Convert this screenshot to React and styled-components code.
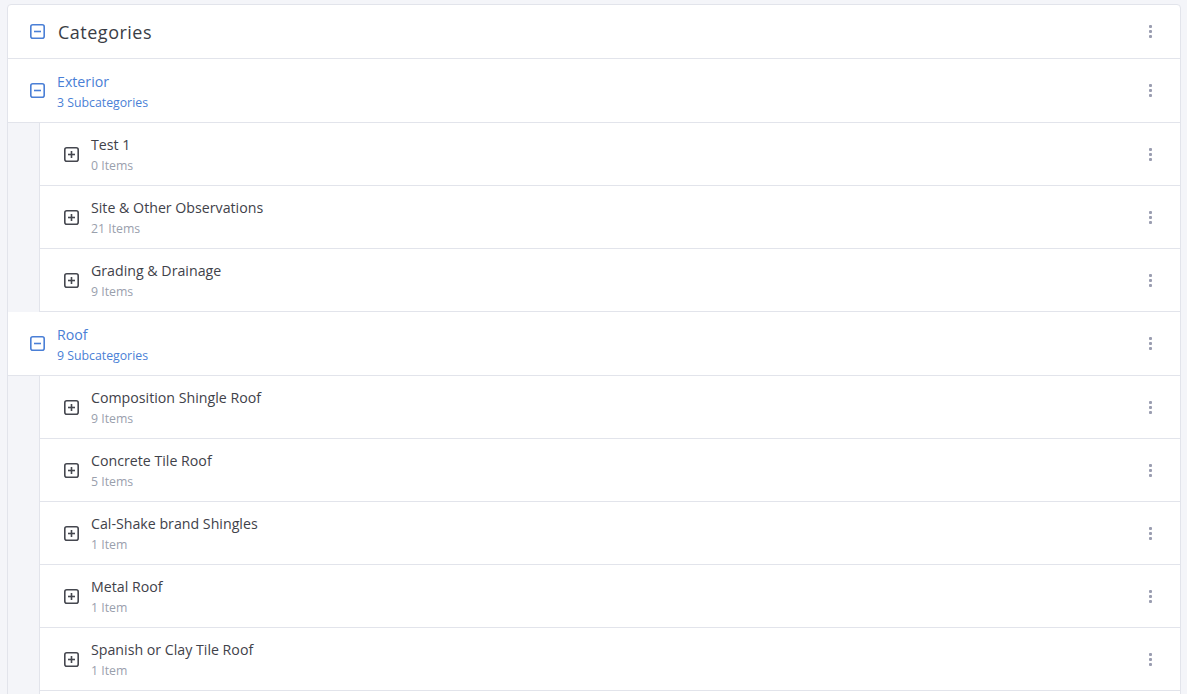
import React from "react";
import styled, { createGlobalStyle } from "styled-components";

const Global = createGlobalStyle`
  html, body { margin: 0; padding: 0; overflow: hidden; background: #f4f5f9; }
  body { font-family: "Open Sans", "Noto Sans", sans-serif; }
  * { box-sizing: border-box; }
`;

const Page = styled.div`
  height: 694px;
  padding: 4px 6px 0 7px;
  overflow: hidden;
`;

const Card = styled.div`
  display: flex;
  flex-direction: column;
  min-height: 720px;
  background: #fff;
  border: 1px solid #e2e4eb;
  border-radius: 4px;
`;

const Header = styled.div`
  display: flex;
  align-items: center;
  height: 54px;
  padding: 0 24px 0 22px;
  border-bottom: 1px solid #e2e4eb;
`;

const HeaderTitle = styled.div`
  flex: 1;
  margin-left: 13px;
  font-size: 18px;
  letter-spacing: 0.5px;
  color: #3a3d45;
`;

const Row = styled.div`
  display: flex;
  align-items: center;
  height: ${(p) => (p.$category ? 64 : 63)}px;
  padding: 0 24px 0 ${(p) => (p.$category ? 22 : 24)}px;
  border-bottom: 1px solid #e2e4eb;
  background: #fff;
`;

const Texts = styled.div`
  flex: 1;
  display: flex;
  flex-direction: column;
  margin-left: 12px;
  margin-top: 1px;
`;

const Name = styled.div`
  font-size: 14.2px;
  line-height: 20px;
  color: ${(p) => (p.$category ? "#4a7fd6" : "#3f424a")};
`;

const Sub = styled.div`
  font-size: 12.3px;
  line-height: 17px;
  margin-top: 2px;
  color: ${(p) => (p.$category ? "#4a7fd6" : "#9aa0ad")};
`;

const Children = styled.div`
  display: flex;
  flex: ${(p) => (p.$grow ? 1 : "none")};
`;

const Rail = styled.div`
  width: 32px;
  flex: none;
  background: #f4f5f9;
  border-right: 1px solid #e2e4eb;
`;

const ChildList = styled.div`
  flex: 1;
`;

const Kebab = styled.div`
  display: flex;
  flex-direction: column;
  gap: 2px;
  width: 12px;
  align-items: center;
  span {
    width: 3px;
    height: 3px;
    border-radius: 1px;
    background: #9a9db0;
  }
`;

function Dots() {
  return (
    <Kebab>
      <span />
      <span />
      <span />
    </Kebab>
  );
}

function ToggleIcon({ plus, color }) {
  return (
    <svg width="15" height="15" viewBox="0 0 15 15" style={{ flex: "none" }}>
      <rect x="0.8" y="0.8" width="13.4" height="13.4" rx="2" fill="none" stroke={color} strokeWidth="1.6" />
      <line x1="4" y1="7.5" x2="11" y2="7.5" stroke={color} strokeWidth="1.6" />
      {plus && <line x1="7.5" y1="4" x2="7.5" y2="11" stroke={color} strokeWidth="1.6" />}
    </svg>
  );
}

const BLUE = "#4a7fd6";
const DARK = "#45474f";

const data = [
  {
    name: "Exterior",
    count: 3,
    items: [
      ["Test 1", "0 Items"],
      ["Site & Other Observations", "21 Items"],
      ["Grading & Drainage", "9 Items"],
    ],
  },
  {
    name: "Roof",
    count: 9,
    items: [
      ["Composition Shingle Roof", "9 Items"],
      ["Concrete Tile Roof", "5 Items"],
      ["Cal-Shake brand Shingles", "1 Item"],
      ["Metal Roof", "1 Item"],
      ["Spanish or Clay Tile Roof", "1 Item"],
    ],
  },
];

export default function App() {
  return (
    <>
      <Global />
      <Page>
        <Card>
          <Header>
            <ToggleIcon color={BLUE} />
            <HeaderTitle>Categories</HeaderTitle>
            <Dots />
          </Header>
          {data.map((cat, i) => (
            <React.Fragment key={cat.name}>
              <Row $category>
                <ToggleIcon color={BLUE} />
                <Texts>
                  <Name $category>{cat.name}</Name>
                  <Sub $category>{cat.count} Subcategories</Sub>
                </Texts>
                <Dots />
              </Row>
              <Children $grow={i === data.length - 1}>
                <Rail />
                <ChildList>
                  {cat.items.map(([n, s]) => (
                    <Row key={n}>
                      <ToggleIcon plus color={DARK} />
                      <Texts>
                        <Name>{n}</Name>
                        <Sub>{s}</Sub>
                      </Texts>
                      <Dots />
                    </Row>
                  ))}
                </ChildList>
              </Children>
            </React.Fragment>
          ))}
        </Card>
      </Page>
    </>
  );
}
